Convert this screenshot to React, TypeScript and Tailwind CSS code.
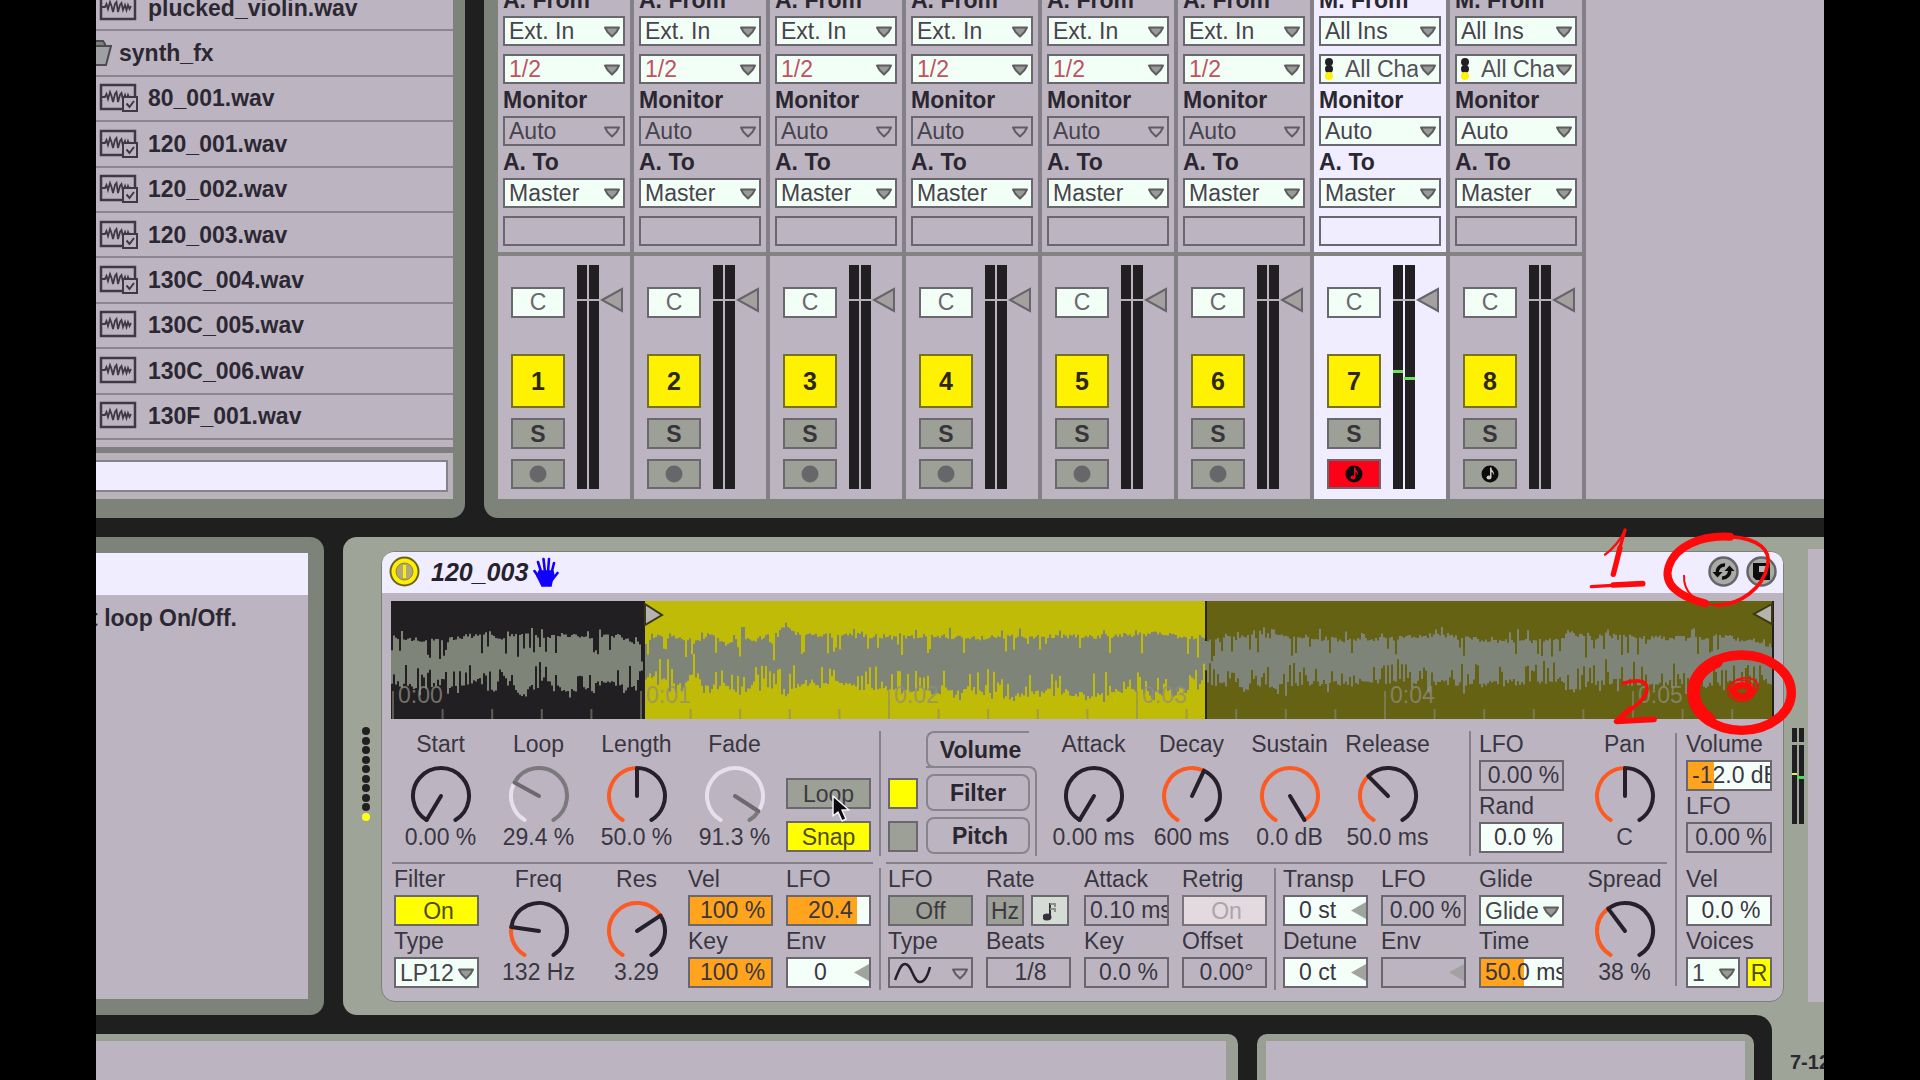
import type { ReactNode } from "react";

const FILES = [
  { name: "plucked_violin.wav", mapped: false },
  { name: "synth_fx", folder: true },
  { name: "80_001.wav", mapped: true },
  { name: "120_001.wav", mapped: true },
  { name: "120_002.wav", mapped: true },
  { name: "120_003.wav", mapped: true },
  { name: "130C_004.wav", mapped: true },
  { name: "130C_005.wav", mapped: false },
  { name: "130C_006.wav", mapped: false },
  { name: "130F_001.wav", mapped: false },
];

const TRACKS = [1, 2, 3, 4, 5, 6, 7, 8];

function SampleIcon({ mapped }: { mapped?: boolean }) {
  return (
    <svg className="h-[30px] w-[40px] shrink-0" viewBox="0 0 40 30" fill="none" stroke="#3f3947">
      <rect x="2" y="2" width="34" height="24" strokeWidth="2.500" />
      <path
        d="M3 14h3l1.500-3 1.500 5 2-7 1.500 4 1.500 6 2-8 1.500-2 1.500 10 2-7 1.500-2 1.500 7 2-5 1.500 5 1.500-5 1.500 4 1.500-3"
        strokeWidth="1.800"
      />
      {mapped && (
        <>
          <rect x="24" y="14" width="14" height="14" strokeWidth="2" fill="#bcb5c1" />
          <path d="M27.500 20.500l3 3.500 4.500-6" strokeWidth="2" />
        </>
      )}
    </svg>
  );
}

function Browser() {
  return (
    <aside className="w-[369px] shrink-0 rounded-br-[14px] bg-[#7e8379] pr-3 pb-[19px]">
      <div className="overflow-hidden bg-[#bcb5c1]">
        <ul className="-mt-[14px] grid h-[454px] auto-rows-fr">
          {FILES.map((f) => (
            <li key={f.name} className="flex items-center border-b-2 border-[#8a8590] font-bold text-[#2c2833]">
              {f.folder ? (
                <>
                  <svg className="mr-[7px] h-[28px] w-4" viewBox="0 0 16 28" stroke="#4b4b50" strokeWidth="2">
                    <path d="M-4 2H7l2 3v4h-13z" fill="#7e8379" />
                    <path d="M-4 7H15L10 26H-4z" fill="#9fa0a4" />
                  </svg>
                  {f.name}
                </>
              ) : (
                <>
                  <span className="mr-[9px] ml-[3px] flex">
                    <SampleIcon mapped={f.mapped} />
                  </span>
                  {f.name}
                </>
              )}
            </li>
          ))}
        </ul>
        <div className="h-[7px]" />
      </div>
      <div className="h-[6px] bg-[#7f7e80]" />
      <div className="bg-[#b7b3b8] py-[7px] pr-[5px]">
        <input
          aria-label="Search files"
          className="block h-8 w-full border-2 border-l-0 border-[#85828a] bg-[#efedff]"
        />
      </div>
    </aside>
  );
}

function Arrow({ hollow }: { hollow?: boolean }) {
  return (
    <svg className="pointer-events-none absolute top-1/2 right-[4px] h-[14px] w-[18px] -translate-y-1/2" viewBox="0 0 18 14">
      <path
        d="M2 3.500h14L13.500 8 9 12.500 4.500 8z"
        fill={hollow ? "#bcb5c1" : "#979c94"}
        stroke="#5f5c63"
        strokeWidth="2"
        strokeLinejoin="round"
      />
    </svg>
  );
}

function Picker({
  label,
  value,
  tone = "text-[#47434d]",
  off,
  midi,
}: {
  label: string;
  value: string;
  tone?: string;
  off?: boolean;
  midi?: boolean;
}) {
  return (
    <div className="relative h-full w-full">
      <select
        aria-label={label}
        className={`block h-full w-full appearance-none border-2 border-[#6a676e] pr-[21px] ${midi ? "pl-6" : "pl-1"} ${
          off ? "bg-[#bcb5c1]" : "bg-[#f2fff6]"
        } ${tone}`}
      >
        <option>{value}</option>
      </select>
      {midi && (
        <svg className="pointer-events-none absolute top-[4px] left-[6px] h-[22px] w-2" viewBox="0 0 8 22">
          <circle cx="4" cy="4" r="4" fill="#221f24" />
          <circle cx="4" cy="11" r="4" fill="#221f24" />
          <circle cx="4" cy="18" r="4" fill="#fff200" />
        </svg>
      )}
      <Arrow hollow={off} />
    </div>
  );
}

function Meter({ levels }: { levels?: boolean }) {
  return (
    <div className="relative flex h-[224px] gap-[2px]">
      <div className="w-[10px] bg-[#221f22]" />
      <div className="w-[10px] bg-[#221f22]" />
      <div className="absolute top-[34px] left-0 h-[2px] w-full bg-[#b5b2b8]" />
      {levels && (
        <>
          <div className="absolute top-[105px] left-0 h-[3px] w-[10px] bg-[#6fe05f]" />
          <div className="absolute top-[112px] left-[11px] h-[3px] w-[11px] bg-[#6fe05f]" />
        </>
      )}
    </div>
  );
}

function Track({ n }: { n: number }) {
  const midi = n > 6;
  const active = n === 7;
  const bg = active ? "bg-[#efedff]" : "bg-[#bcb5c1]";
  return (
    <div className={`w-[136px] shrink-0 border-r-4 border-[#838088] ${bg}`}>
      <div className="px-[5px] pb-[6px] text-[#2b2730]">
        <div className="-mt-[13px] h-[26px] font-bold">{midi ? "M. From" : "A. From"}</div>
        <div className="mt-[3px] h-[30px]">
          <Picker label={`Track ${n} input type`} value={midi ? "All Ins" : "Ext. In"} />
        </div>
        <div className="mt-2 h-[30px]">
          <Picker
            label={`Track ${n} input channel`}
            value={midi ? "All Channels" : "1/2"}
            midi={midi}
            tone={midi ? "text-[#55515a]" : "text-[#c0515f]"}
          />
        </div>
        <div className="mt-[3px] h-[26px] font-bold">Monitor</div>
        <div className="mt-[3px] h-[30px]">
          <Picker label={`Track ${n} monitor`} value="Auto" off={!midi} />
        </div>
        <div className="mt-[3px] h-[26px] font-bold">A. To</div>
        <div className="mt-[3px] h-[30px]">
          <Picker label={`Track ${n} output`} value="Master" />
        </div>
        <div className="mt-2 h-[30px] border-2 border-[#6a676e]" />
      </div>
      <div className="h-1 bg-[#838382]" />
      <div className="flex pt-[9px] pb-[10px] pl-[13px]">
        <div className="flex w-[54px] flex-col pt-[22px]">
          <input
            aria-label={`Track ${n} pan`}
            defaultValue="C"
            className="h-[31px] w-full border-2 border-[#6a676e] bg-[#f2fff6] text-center text-[#6b686e]"
          />
          <button className="mt-9 h-[54px] border-2 border-[#77711f] bg-[#fff200] text-[25px] leading-none font-bold text-[#2c2812]">
            {n}
          </button>
          <button className="mt-[10px] h-[31px] border-2 border-[#6a676e] bg-[#9ca097] font-bold text-[#38343a]">S</button>
          <button
            aria-label={`Arm track ${n}`}
            className={`mt-[10px] flex h-[30px] items-center justify-center border-2 border-[#6a676e] ${
              active ? "bg-[#ff0018]" : "bg-[#9ca097]"
            }`}
          >
            <svg className="size-[18px]" viewBox="0 0 18 18">
              <circle cx="9" cy="9" r="8.500" fill={midi ? "#0c0a0b" : "#67666a"} />
              {midi && (
                <g fill={active ? "#ff0018" : "#c9ccc5"}>
                  <path d="M9 2.500h1.500c0 3.500 3.500 4 2.500 8-.4-2-1.200-3-2.500-3.500V12H9z" />
                  <ellipse cx="8" cy="12.500" rx="2.500" ry="2" />
                </g>
              )}
            </svg>
          </button>
        </div>
        <div className="ml-3">
          <Meter levels={active} />
        </div>
        <svg className="mt-[22px] ml-[1px] h-[26px] w-6" viewBox="0 0 24 26">
          <path d="M2 13L22 2v22z" fill="#a3a09f" stroke="#67646b" strokeWidth="2" />
        </svg>
      </div>
    </div>
  );
}

const C = 31;
const R = 28;
function point(deg: number, r = R) {
  const a = (deg * Math.PI) / 180;
  return `${(C + r * Math.sin(a)).toFixed(1)} ${(39 - r * Math.cos(a)).toFixed(1)}`;
}
function arc(from: number, to: number) {
  return `M${point(from)}A${R} ${R} 0 ${to - from > 180 ? 1 : 0} 1 ${point(to)}`;
}

function Knob({
  label,
  value,
  at,
  off,
  className = "",
}: {
  label: string;
  value: string;
  at: number;
  off?: boolean;
  className?: string;
}) {
  const deg = -149 + at * 298;
  const rest = off ? "#7b787e" : "#25202c";
  return (
    <label className={`relative flex flex-col items-center whitespace-nowrap ${className}`}>
      <span className="h-[26px]">{label}</span>
      <input type="range" min="0" max="1" step="any" defaultValue={at} className="sr-only" />
      <svg className="h-[67px] w-[62px]" viewBox="0 0 62 67" fill="none" strokeWidth="4" strokeLinecap="round">
        {at < 1 && <path d={arc(deg, 149)} stroke={rest} />}
        {at > 0 && <path d={arc(-149, deg)} stroke={off ? "#e6dfee" : "#fc5a23"} />}
        <path d={`M${C} 39L${point(deg)}`} stroke={off ? "#6d6970" : "#25202c"} />
      </svg>
      <span className="h-[26px]">{value}</span>
    </label>
  );
}

function Field({ label, children }: { label: string; children: ReactNode }) {
  return (
    <div className="mb-[2px] min-w-0">
      <div className="h-[26px] whitespace-nowrap">{label}</div>
      <div className="mt-[3px] flex h-[31px]">{children}</div>
    </div>
  );
}

function NumberBox({
  label,
  value,
  fill,
  off,
  slider,
  long,
}: {
  label: string;
  value: string;
  fill?: number;
  off?: boolean;
  slider?: boolean;
  long?: boolean;
}) {
  const style =
    fill === undefined
      ? undefined
      : { backgroundImage: `linear-gradient(90deg,#ffa41c ${fill}%,transparent ${fill}%)` };
  return (
    <div className="relative h-full w-full">
      <input
        aria-label={label}
        defaultValue={value}
        style={style}
        className={`block h-full w-full border-2 border-[#6a676e] ${off ? "bg-[#bcb5c1]" : "bg-[#f5fff9]"} ${
          long ? "pl-1 text-left" : slider ? "pr-4 text-center" : "pl-1 text-center"
        }`}
      />
      {slider && (
        <svg className="pointer-events-none absolute top-[7px] right-[2px] h-[17px] w-[15px]" viewBox="0 0 15 17">
          <path d="M0 8.500L15 0v17z" fill={off ? "#a4a1a5" : "#9fa49c"} />
        </svg>
      )}
    </div>
  );
}

function Toggle({ children, on, className = "w-full" }: { children?: ReactNode; on?: boolean; className?: string }) {
  return (
    <button
      aria-pressed={!!on}
      className={`flex h-[31px] items-center justify-center border-2 border-[#6a676e] ${
        on ? "bg-[#ffff00] text-[#4d4a16]" : "bg-[#9ca097] text-[#3d3a3f]"
      } ${className}`}
    >
      {children}
    </button>
  );
}

const W = 1383;
// Upper and lower bounds of the sample, as [x, top, bottom] key points.
const ENVELOPE = [
  [0, 34, 84], [30, 38, 88], [50, 39, 82], [65, 35, 90], [85, 33, 80], [95, 31, 92], [110, 36, 78], [130, 32, 95], [150, 34, 80],
  [175, 32, 90], [200, 36, 88], [215, 31, 80], [235, 36, 90], [253, 44, 78], [263, 34, 74], [285, 34, 88], [300, 42, 76],
  [318, 32, 90], [335, 42, 84], [350, 32, 100], [360, 40, 84], [375, 32, 88], [380, 42, 84], [394, 20, 94], [405, 32, 84],
  [430, 33, 82], [470, 33, 88], [510, 35, 88], [540, 33, 92], [580, 36, 90], [620, 34, 98], [660, 34, 90], [700, 35, 98],
  [730, 33, 90], [765, 31, 94], [800, 36, 90], [820, 38, 84], [870, 33, 88], [920, 36, 84], [970, 38, 82], [1040, 33, 82],
  [1100, 38, 84], [1170, 38, 80], [1175, 30, 92], [1200, 36, 84], [1240, 34, 82], [1290, 36, 88], [1330, 34, 84], [1383, 44, 82],
];
function wavePath() {
  let seed = 71;
  const rnd = () => {
    seed = (seed * 16807) % 2147483647;
    return seed / 2147483647;
  };
  const top: string[] = [];
  const low: string[] = [];
  let k = 0;
  for (let x = 0; x <= W; x += 2) {
    while (k < ENVELOPE.length - 2 && ENVELOPE[k + 1][0] < x) k++;
    const [x0, t0, b0] = ENVELOPE[k];
    const [x1, t1, b1] = ENVELOPE[k + 1];
    const f = (x - x0) / (x1 - x0);
    const spikeTop = rnd() < 0.13 ? 8 + 12 * rnd() : rnd() < 0.14 ? -9 * rnd() : 0;
    const spikeLow = rnd() < 0.28 ? -6 - 16 * rnd() : rnd() < 0.16 ? 9 * rnd() : 0;
    const t = t0 + (t1 - t0) * f + rnd() * 5 - 1 + spikeTop;
    const b = b0 + (b1 - b0) * f + rnd() * 7 - 5 + spikeLow;
    top.push(`${x} ${t.toFixed(1)}H${x + 2}`);
    low.unshift(`${x + 2} ${b.toFixed(1)}H${x}`);
  }
  return `M${top.join("L")}L${low.join("L")}Z`;
}
const WAVE = wavePath();
const TICKS = Array.from({ length: 28 }, (_, i) => i);
const SECONDS = ["0:00", "0:01", "0:02", "0:03", "0:04", "0:05"];

function Waveform() {
  return (
    <div className="relative h-[118px] overflow-hidden">
      <svg className="h-full w-full" viewBox="0 0 1383 118" preserveAspectRatio="none">
        <rect width="253" height="118" fill="#211f21" />
        <rect x="253" width="562" height="118" fill="#c0bb06" />
        <rect x="815" width="568" height="118" fill="#656214" />
        {TICKS.map((i) => (
          <rect
            key={i}
            x={1 + i * 49.6}
            y={i % 5 ? 108 : 90}
            width="2"
            height={i % 5 ? 10 : 28}
            fill="#8a8874"
            opacity="0.6"
          />
        ))}
        <path d="M815 0V118" stroke="#2a2810" strokeWidth="2" />
        <path d={WAVE} fill="#7f8479" />
        <path d="M253 0V118M1382 0V118" stroke="#221f21" strokeWidth="2" />
        <path d="M254 3L271 14L254 24z" fill="#b5b3b0" stroke="#3b3810" strokeWidth="2" />
        <path d="M1381 3L1363 13L1381 23z" fill="#b5b3b0" stroke="#3b3810" strokeWidth="2" />
      </svg>
      {SECONDS.map((s, i) => (
        <span
          key={s}
          className="absolute top-[81px] h-[26px] text-[#8f8d80] opacity-75"
          style={{ left: `${((7 + i * 248) / W) * 100}%` }}
        >
          {s}
        </span>
      ))}
    </div>
  );
}

function DeviceHeader() {
  return (
    <header className="flex h-[41px] items-center rounded-t-[12px] bg-[#efedff] pr-[6px] pb-[2px] pl-[7px]">
      <button aria-label="Device on">
        <svg className="size-[31px]" viewBox="0 0 31 31">
          <circle cx="15.500" cy="15.500" r="14" fill="#ffee00" stroke="#6a651c" strokeWidth="2" />
          <circle cx="15.500" cy="15.500" r="8.500" fill="#b0a77a" stroke="#8e8638" strokeWidth="1" />
          <rect x="14" y="9" width="3" height="13" fill="#ffee00" />
        </svg>
      </button>
      <h2 className="ml-[11px] text-[25px] leading-[30px] font-bold text-[#26222c] italic">120_003</h2>
      <svg className="ml-[5px] h-[30px] w-[26px]" viewBox="0 0 26 30" stroke="#1200ff" strokeLinecap="round">
        <path d="M6 14h14l1 5-2 5-1 5H9l-2-4-3-6z" fill="#1200ff" strokeWidth="1.500" />
        <path d="M8.500 16L5 5M12 15L10.500 2M15 15L16 2M18.500 16L21 6M19 23l5.500-7M7 22L1.500 14" strokeWidth="2.600" />
      </svg>
      <span className="flex-1" />
      <button aria-label="Hot-swap preset">
        <svg className="size-[31px]" viewBox="0 0 31 31">
          <circle cx="15.500" cy="15.500" r="14" fill="#a8aaa6" stroke="#66646a" strokeWidth="2.500" />
          <path d="M9.500 17.500a7 7 0 0 1 7.500-8.500M21.500 13.500a7 7 0 0 1-7.500 8.500" fill="none" stroke="#0d0b0e" strokeWidth="3.400" />
          <path d="M4.500 16h10l-5 5.500zM26.500 15h-10l5-5.500z" fill="#0d0b0e" />
        </svg>
      </button>
      <button aria-label="Save preset" className="ml-[7px]">
        <svg className="size-[31px]" viewBox="0 0 31 31">
          <circle cx="15.500" cy="15.500" r="14" fill="#a8aaa6" stroke="#66646a" strokeWidth="2.500" />
          <path d="M7 7h17v17H10l-3-3z" fill="#0d0b0e" />
          <rect x="13" y="10" width="7" height="6" fill="#b8bab6" />
        </svg>
      </button>
    </header>
  );
}

function Tabs() {
  return (
    <div className="flex w-[111px] flex-col font-bold text-[#2b2730]">
      <button className="h-[37px] w-[103px] rounded-l-[8px] border-2 border-r-0 border-[#88848d] pl-1">Volume</button>
      <div className="-mt-[2px] flex flex-1 flex-col gap-[6px] rounded-tr-[8px] border-t-2 border-r-2 border-[#88848d] pt-[6px]">
        <button className="h-[37px] w-[104px] rounded-[8px] border-2 border-[#88848d]">Filter</button>
        <button className="h-[37px] w-[104px] rounded-[8px] border-2 border-[#88848d] pl-1">Pitch</button>
      </div>
    </div>
  );
}

function Sampler() {
  return (
    <section className="min-w-0 flex-1 self-start rounded-[14px] border border-[#7c8078] bg-[#bcb5c1]">
      <DeviceHeader />
      <div className="mt-2 px-[9px]">
        <Waveform />
      </div>
      <div className="flex pt-3 pr-[11px] pb-[11px] pl-3 text-[#3a3641]">
        <div className="min-w-0 flex-[477]">
          <div className="grid h-[131px] grid-cols-5 gap-x-[13px]">
            <Knob label="Start" value="0.00 %" at={0} className="pl-2" />
            <Knob label="Loop" value="29.4 %" at={0.294} off className="pl-2" />
            <Knob label="Length" value="50.0 %" at={0.5} className="pl-2" />
            <Knob label="Fade" value="91.3 %" at={0.913} off className="pl-2" />
            <div className="relative flex flex-col gap-3 pt-[47px]">
              <Toggle>Loop</Toggle>
              <Toggle on>Snap</Toggle>
              <svg className="pointer-events-none absolute top-[64px] left-[46px] h-[28px] w-[18px]" viewBox="0 0 18 28">
                <path
                  d="M1 1v20l5-4 4 9 4-2-4-9h7z"
                  fill="#0b090c"
                  stroke="#f4f2f8"
                  strokeWidth="1.500"
                  strokeLinejoin="round"
                />
              </svg>
            </div>
          </div>
          <div className="-mx-[2px] h-[2px] bg-[#85818b]" />
          <div className="mt-[2px] grid grid-cols-5 gap-x-[13px]">
            <div>
              <Field label="Filter">
                <Toggle on className="w-full pl-1">
                  On
                </Toggle>
              </Field>
              <Field label="Type">
                <Picker label="Filter type" value="LP12" />
              </Field>
            </div>
            <Knob label="Freq" value="132 Hz" at={0.225} className="pl-2" />
            <Knob label="Res" value="3.29" at={0.69} className="pl-2" />
            <div>
              <Field label="Vel">
                <NumberBox label="Filter velocity" value="100 %" fill={100} />
              </Field>
              <Field label="Key">
                <NumberBox label="Filter key" value="100 %" fill={100} />
              </Field>
            </div>
            <div>
              <Field label="LFO">
                <NumberBox label="Filter LFO" value="20.4" fill={85} />
              </Field>
              <Field label="Env">
                <NumberBox label="Filter envelope" value="0" slider />
              </Field>
            </div>
          </div>
        </div>

        <div className="flex w-[17px] flex-col items-center gap-3">
          <div className="h-[125px] w-[2px] bg-[#85818b]" />
          <div className="w-[2px] flex-1 bg-[#85818b]" />
        </div>

        <div className="min-w-0 flex-[777]">
          <div className="flex h-[131px]">
            <div className="mr-2 flex w-[30px] flex-col gap-3 pt-[47px]">
              <Toggle on />
              <Toggle />
            </div>
            <div className="mr-[14px] flex h-[125px]">
              <Tabs />
            </div>
            <div className="grid flex-1 grid-cols-4 gap-x-[13px]">
              <Knob label="Attack" value="0.00 ms" at={0} />
              <Knob label="Decay" value="600 ms" at={0.585} />
              <Knob label="Sustain" value="0.0 dB" at={1} />
              <Knob label="Release" value="50.0 ms" at={0.35} />
            </div>
            <div className="mr-2 ml-[39px] h-[125px] w-[2px] bg-[#85818b]" />
            <div className="w-[85px]">
              <Field label="LFO">
                <NumberBox label="Pan LFO" value="0.00 %" off />
              </Field>
              <Field label="Rand">
                <NumberBox label="Pan random" value="0.0 %" />
              </Field>
            </div>
            <div className="ml-4 w-[85px]">
              <Knob label="Pan" value="C" at={0.5} className="pl-1" />
            </div>
          </div>
          <div className="-mx-[2px] h-[2px] bg-[#85818b]" />
          <div className="mt-[2px] flex">
            <div className="grid flex-[379] grid-cols-4 gap-x-[13px]">
              <Field label="LFO">
                <Toggle>Off</Toggle>
              </Field>
              <Field label="Rate">
                <Toggle className="w-[38px]">Hz</Toggle>
                <button
                  aria-label="Sync rate"
                  className="ml-[7px] flex h-[31px] w-[38px] items-center justify-center border-2 border-[#6a676e] bg-[#d5dcd5]"
                >
                  <svg className="h-[20px] w-[14px]" viewBox="0 0 14 20" fill="none" stroke="#35323a" strokeWidth="2">
                    <ellipse cx="4" cy="16" rx="3.500" ry="2.500" fill="#35323a" />
                    <path d="M7 16V2" />
                    <path d="M7 3h5v3M7 8h5v3" stroke="#8b908b" />
                  </svg>
                </button>
              </Field>
              <Field label="Attack">
                <NumberBox label="LFO attack" value="0.10 ms" off long />
              </Field>
              <Field label="Retrig">
                <button className="w-full border-2 border-[#78747c] bg-[#e4d9df] pl-1 text-[#aaa5ab]">On</button>
              </Field>
              <Field label="Type">
                <div className="relative w-full">
                  <select aria-label="LFO type" className="h-full w-full appearance-none border-2 border-[#6a676e] text-transparent">
                    <option>Sine</option>
                  </select>
                  <svg className="pointer-events-none absolute top-[5px] left-[6px] h-[22px] w-[38px]" viewBox="0 0 38 22">
                    <path d="M1 18C5 8 7 2 11 2C18 2 19 20 26 20C31 20 34 13 36 5" fill="none" stroke="#25202c" strokeWidth="2.500" />
                  </svg>
                  <Arrow hollow />
                </div>
              </Field>
              <Field label="Beats">
                <NumberBox label="LFO beats" value="1/8" off />
              </Field>
              <Field label="Key">
                <NumberBox label="LFO key" value="0.0 %" off />
              </Field>
              <Field label="Offset">
                <NumberBox label="LFO offset" value="0.00°" off />
              </Field>
            </div>
            <div className="mx-[7px] mt-[2px] w-[2px] bg-[#85818b]" />
            <div className="grid flex-[281] grid-cols-3 gap-x-[13px]">
              <Field label="Transp">
                <NumberBox label="Transpose" value="0 st" slider />
              </Field>
              <Field label="LFO">
                <NumberBox label="Pitch LFO" value="0.00 %" off />
              </Field>
              <Field label="Glide">
                <Picker label="Glide mode" value="Glide" />
              </Field>
              <Field label="Detune">
                <NumberBox label="Detune" value="0 ct" slider />
              </Field>
              <Field label="Env">
                <NumberBox label="Pitch envelope" value="" off slider />
              </Field>
              <Field label="Time">
                <NumberBox label="Glide time" value="50.0 ms" fill={53} long />
              </Field>
            </div>
            <div className="ml-4 w-[85px]">
              <Knob label="Spread" value="38 %" at={0.376} className="pl-1" />
            </div>
          </div>
        </div>

        <div className="flex w-[21px] justify-center pt-[2px] pb-1">
          <div className="w-[2px] bg-[#85818b]" />
        </div>

        <div className="min-w-0 flex-[86]">
          <div className="h-[135px]">
            <Field label="Volume">
              <NumberBox label="Volume level" value="-12.0 dB" fill={32} long />
            </Field>
            <Field label="LFO">
              <NumberBox label="Volume LFO" value="0.00 %" off />
            </Field>
          </div>
          <Field label="Vel">
            <NumberBox label="Volume velocity" value="0.0 %" />
          </Field>
          <Field label="Voices">
            <div className="h-full flex-1">
              <Picker label="Voice count" value="1" />
            </div>
            <Toggle on className="ml-[6px] w-[26px]">
              R
            </Toggle>
          </Field>
        </div>
      </div>
    </section>
  );
}

function Annotations() {
  return (
    <svg
      aria-hidden
      className="pointer-events-none absolute -top-[17px] right-0 h-[220px] w-[244px]"
      viewBox="240 0 732 660"
      fill="none"
      stroke="#ff0a0a"
      strokeLinecap="round"
      strokeLinejoin="round"
    >
      <path d="M315 104Q352 76 375 32" strokeWidth="7" />
      <path d="M375 30L357 92" strokeWidth="10" />
      <path d="M360 84L340 163" strokeWidth="16" />
      <path d="M274 200L428 191" strokeWidth="10" />
      <path d="M340 195L428 191" strokeWidth="17" />
      <path d="M615 250C530 228 490 190 506 140C525 80 600 45 690 50" strokeWidth="24" />
      <path d="M690 50C780 56 812 92 803 135C790 205 720 255 650 256" strokeWidth="11" />
      <path d="M650 256C585 250 550 215 552 167" strokeWidth="6" />
      <path d="M370 490C400 480 442 476 441 507C438 542 392 566 352 600" strokeWidth="11" />
      <path d="M390 568L350 604L462 598" strokeWidth="17" />
      <ellipse cx="725" cy="518" rx="149" ry="113" strokeWidth="28" />
      <path d="M650 425C570 460 555 545 630 600" strokeWidth="38" />
      <ellipse cx="727" cy="513" rx="25" ry="17" strokeWidth="20" />
      <ellipse cx="732" cy="502" rx="43" ry="28" strokeWidth="5" transform="rotate(-8 732 502)" />
      <ellipse cx="724" cy="512" rx="41" ry="32" strokeWidth="4" />
    </svg>
  );
}

export default function App() {
  return (
    <main className='flex h-screen flex-col overflow-hidden bg-black px-24 font-["Liberation_Sans",Arial,sans-serif] text-[23px] leading-[26px]'>
      <div className="flex flex-1 flex-col overflow-hidden bg-[#201f20]">
        <div className="flex shrink-0 gap-[19px]">
          <Browser />
          <div className="min-w-0 flex-1 rounded-bl-[14px] bg-[#7e8379] pb-[19px] pl-[14px]">
            <div className="flex overflow-hidden bg-[#bcb5c1]">
              {TRACKS.map((n) => (
                <Track key={n} n={n} />
              ))}
            </div>
          </div>
        </div>

        <div className="relative mt-[19px] flex shrink-0 gap-[19px]">
          <aside className="flex w-[228px] shrink-0 flex-col rounded-r-[14px] bg-[#7e8379] py-4 pr-4">
            <div className="h-[42px] bg-[#efedff]" />
            <div className="flex flex-1 justify-end overflow-hidden bg-[#bcb5c1] pt-[10px] pr-[71px] font-bold whitespace-nowrap text-[#2c2833]">
              <p>Default loop On/Off.</p>
            </div>
          </aside>
          <div className="flex min-w-0 flex-1 rounded-l-[14px] bg-[#9ea498] pt-[14px] pb-[13px]">
            <div className="flex w-[38px] justify-center pt-[176px] pl-[8px]">
              <div className="flex h-[94px] flex-col justify-between">
                {Array.from({ length: 10 }, (_, i) => (
                  <div key={i} className={`size-2 rounded-full ${i === 9 ? "bg-[#ffff1a]" : "bg-[#211f22]"}`} />
                ))}
              </div>
            </div>
            <Sampler />
            <div className="relative mt-[177px] mr-1 ml-2 flex h-[96px] gap-[2px]">
              <div className="w-[5px] bg-[#201e20]" />
              <div className="w-[5px] bg-[#201e20]" />
              <div className="absolute top-[14px] left-0 h-[3px] w-full bg-[#9ea498]" />
              <div className="absolute top-[45px] left-0 h-[2px] w-[5px] bg-[#d8f06a]" />
              <div className="absolute top-[48px] left-[6px] h-[3px] w-[6px] bg-[#3fe05a]" />
            </div>
            <div className="-mt-[2px] w-4 bg-[#bcb5c1]" />
          </div>
          <Annotations />
        </div>

        <footer className="flex flex-1 bg-[#9ea498]">
          <div className="grid flex-1 grid-cols-[1142fr_497fr] gap-[19px] rounded-tr-[16px] bg-[#201f20] pt-[19px] pr-[18px]">
            <div className="rounded-tr-[10px] bg-[#9a9f96] pt-[7px] pr-3">
              <div className="h-full bg-[#bcb5c1]" />
            </div>
            <div className="rounded-t-[10px] bg-[#9a9f96] px-[9px] pt-[7px]">
              <div className="h-full bg-[#bcb5c1]" />
            </div>
          </div>
          <div className="w-[52px] overflow-hidden pt-[34px] pl-[18px] text-[20px] font-bold whitespace-nowrap text-[#2c2833]">
            7-12
          </div>
        </footer>
      </div>
    </main>
  );
}
